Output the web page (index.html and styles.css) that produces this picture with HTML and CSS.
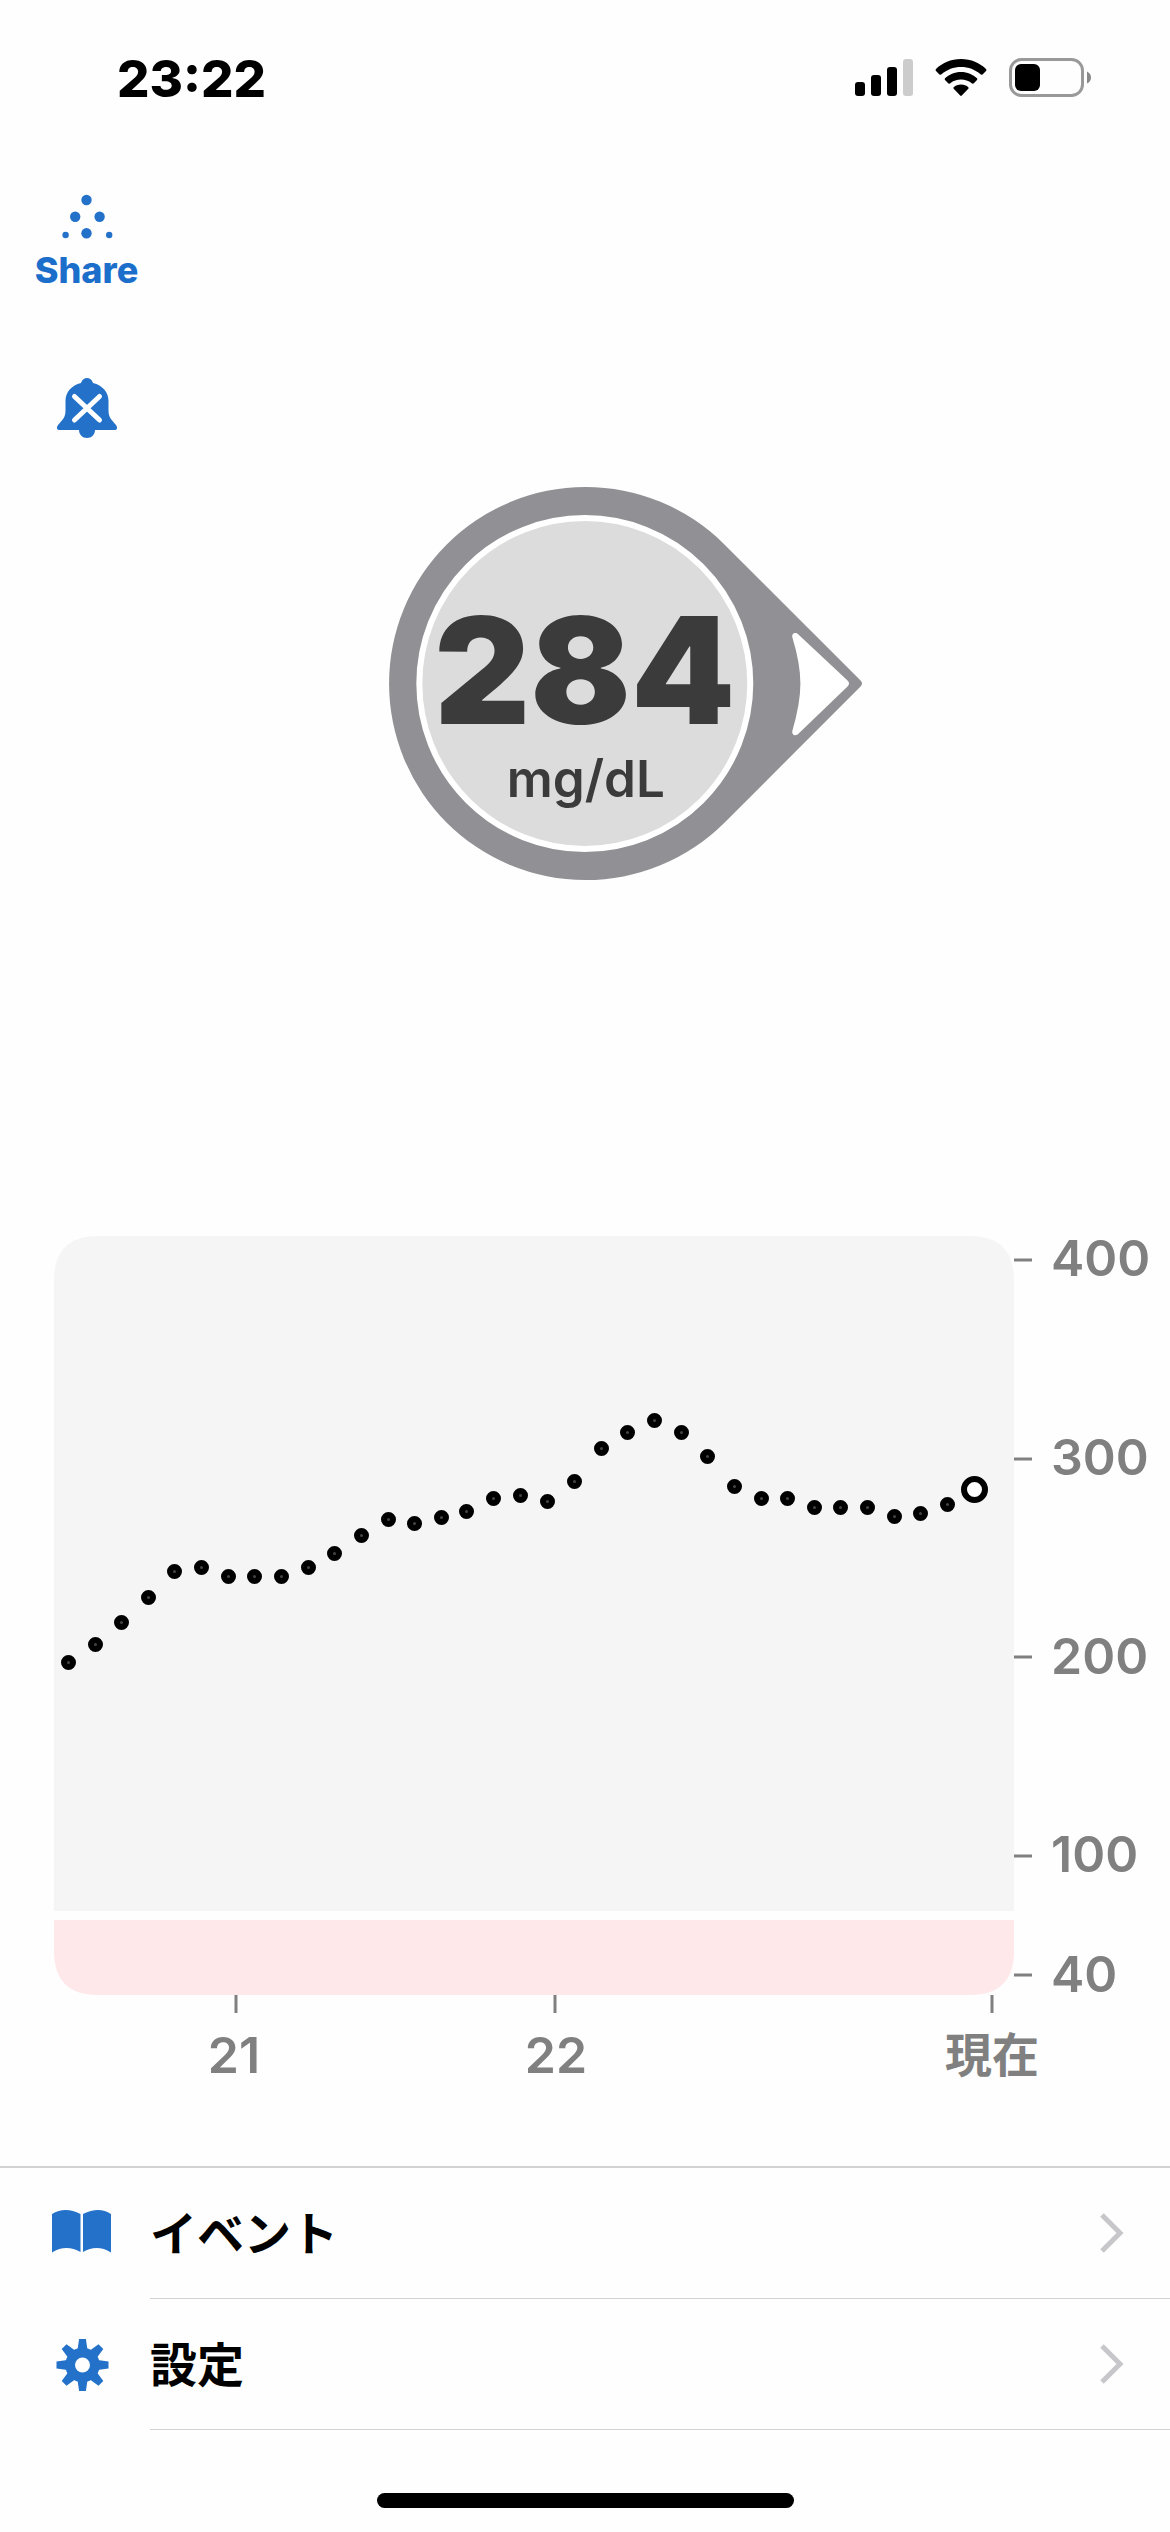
FILE: index.html
```
<!DOCTYPE html>
<html lang="ja">
<head>
  <meta charset="UTF-8">
  <meta name="viewport" content="width=device-width, initial-scale=1.0">
  <title>グルコース</title>
  <link rel="stylesheet" href="styles.css">
</head>
<body>
  <div class="screen">
    <!-- Status bar -->
    <header class="status-bar">
      <span class="status-time">23:22</span>
      <div class="status-icons">
        <svg width="58" height="40" viewBox="0 0 58 40" aria-hidden="true">
          <rect x="0" y="24" width="10" height="14" rx="3"/>
          <rect x="16" y="17" width="10" height="21" rx="3"/>
          <rect x="32" y="9" width="10" height="29" rx="3"/>
          <rect x="48" y="1" width="10" height="37" rx="3" fill="#ccc"/>
        </svg>
        <svg width="52" height="40" viewBox="0 0 52 40" aria-hidden="true">
          <path d="M26 1C16 1 7 5 1 11Q0 12 1 13L4.500 16.500Q5.500 17 6.500 16.300C12 11.500 18.500 9 26 9S40 11.500 45.500 16.300Q46.500 17 47.500 16.500L51 13Q52 12 51 11C45 5 36 1 26 1Z"/>
          <path d="M26 14C19.500 14 14 16.500 10 20.300Q9.300 21 10 22L13.500 25.500Q14.500 26 15.300 25.300C18.300 22.700 22 21.500 26 21.500S33.700 22.700 36.700 25.300Q37.500 26 38.500 25.500L42 22Q42.700 21 42 20.300C38 16.500 32.500 14 26 14Z"/>
          <path d="M26 26.500C23 26.500 20.500 27.500 18.700 29.200Q18 30 18.700 30.800L25.200 37.500Q26 38.300 26.800 37.500L33.300 30.800Q34 30 33.300 29.200C31.500 27.500 29 26.500 26 26.500Z"/>
        </svg>
        <svg width="82" height="40" viewBox="0 0 82 40" aria-hidden="true">
          <rect x="1.500" y="1.500" width="72" height="36" rx="11" fill="none" stroke="#999" stroke-width="3"/>
          <rect x="6" y="6" width="25" height="27" rx="6"/>
          <path d="M78 13.500Q82 15.500 82 19.500T78 25.500Z" fill="#888"/>
        </svg>
      </div>
    </header>

    <!-- Share and alarm buttons -->
    <div class="toolbar">
      <button type="button" class="tool-button">
        <svg width="46" height="44" viewBox="0 0 46 44" aria-hidden="true">
          <circle cx="22.500" cy="6" r="5.200"/>
          <circle cx="11.200" cy="22.700" r="5.200"/>
          <circle cx="35.600" cy="22.700" r="5.200"/>
          <circle cx="22.500" cy="39.300" r="5.200"/>
          <circle cx="1.600" cy="41" r="3.200"/>
          <circle cx="45.200" cy="41" r="3.200"/>
        </svg>
        <span>Share</span>
      </button>
      <button type="button" class="tool-button" aria-label="アラームオフ">
        <svg width="60" height="60" viewBox="0 0 60 60" aria-hidden="true">
          <path d="M24 5C25 1.500 27.500 0 30 0S35 1.500 36 5C45.500 7.500 51.500 14 51.500 23V32C51.500 35 52 38 53 39.500C54.500 42 57 44.500 59 47Q60.500 49 60 50.500Q59.500 52 57.500 52H38C38 56.500 34.500 60 30 60S22 56.500 22 52H2.500Q0.500 52 0 50.500Q-0.500 49 1 47C3 44.500 5.500 42 7 39.500C8 38 8.500 35 8.500 32V23C8.500 14 14.500 7.500 24 5Z"/>
          <path class="bell-cross" d="M17.500 18.500L42.500 42M42.500 18.500L17.500 42"/>
        </svg>
      </button>
    </div>

    <!-- Current reading -->
    <main>
      <svg class="gauge" viewBox="-280 -197 560 394" role="img" aria-label="284 mg/dL">
        <path class="gauge-ring" d="M139 -139A196 196 0 1 0 139 139L275 3Q278 0 275 -3Z"/>
        <circle class="gauge-face" r="165"/>
        <path class="gauge-arrow" d="M207 -46C206 -50 210 -52 213 -49L262 -3Q265 0 262 3L213 50C210 53 206 51 207 47Q215 20 215 0T207 -46Z"/>
        <text class="gauge-value" x="0" y="40">284</text>
        <text class="gauge-unit" x="1" y="113">mg/dL</text>
      </svg>

      <!-- Glucose history -->
      <svg class="chart" viewBox="0 0 1170 850" role="img" aria-label="グルコース値の推移">
        <path class="range-normal" d="M54 675V44Q54 0 98 0H970Q1014 0 1014 44V675Z"/>
        <path class="range-low" d="M54 684H1014V715Q1014 759 970 759H98Q54 759 54 715Z"/>
        <path class="ticks" d="M1014 24H1032M1014 223H1032M1014 421H1032M1014 620H1032M1014 739H1032M236 759V777M555 759V777M992 759V777"/>
        <g class="axis-y">
          <text x="1051" y="40">400</text>
          <text x="1051" y="239">300</text>
          <text x="1051" y="438">200</text>
          <text x="1051" y="636">100</text>
          <text x="1051" y="756">40</text>
        </g>
        <g class="axis-x">
          <text x="234" y="837">21</text>
          <text x="556" y="837">22</text>
          <text class="axis-now" x="992" y="836">現在</text>
        </g>
        <g id="readings"></g>
        <circle class="reading-now" cx="974.500" cy="253.500" r="10.500"/>
      </svg>
    </main>

    <!-- Menu -->
    <nav class="menu">
      <a href="#events" class="menu-item">
        <svg class="menu-icon" viewBox="0 0 66 60" aria-hidden="true">
          <path d="M3 10Q16 2 31.500 10V48Q17 40 3 48.500Z"/>
          <path d="M34 10Q50 2 62 10V48.500Q48 40 34 48Z"/>
        </svg>
        <span class="menu-label">
          <span class="menu-text">イベント</span>
          <svg class="chevron" viewBox="0 0 24 40" aria-hidden="true"><path d="M2 2L20 20L2 38"/></svg>
        </span>
      </a>
      <a href="#settings" class="menu-item">
        <svg class="menu-icon" viewBox="0 0 66 60" aria-hidden="true">
          <g transform="translate(33.500 30)">
            <path id="teeth" d="M-5 -15L-3.400 -26H3.400L5 -15ZM-5 15L-3.400 26H3.400L5 15ZM-15 -5L-26 -3.400V3.400L-15 5ZM15 -5L26 -3.400V3.400L15 5Z"/>
            <use href="#teeth" transform="rotate(45)"/>
            <circle r="17.300"/>
            <circle class="gear-hole" r="7.500"/>
          </g>
        </svg>
        <span class="menu-label">
          <span class="menu-text">設定</span>
          <svg class="chevron" viewBox="0 0 24 40" aria-hidden="true"><path d="M2 2L20 20L2 38"/></svg>
        </span>
      </a>
    </nav>

    <div class="home-indicator"></div>
  </div>

  <script>
    // Past readings as [x, y] in chart units
    const readings = [
      [68, 426], [95, 408], [121, 386], [148, 361], [174, 335], [201, 331],
      [228, 340], [254, 340], [281, 340], [308, 331], [334, 317], [361, 299],
      [388, 283], [414, 287], [441, 281], [466, 275], [493, 262], [520, 259],
      [547, 265], [574, 245], [601, 212], [627, 196], [654, 184], [681, 196],
      [707, 220], [734, 250], [761, 262], [787, 262], [814, 271], [840, 271],
      [867, 271], [894, 280], [920, 277], [947, 268]
    ];

    const group = document.getElementById('readings');
    readings.forEach(([x, y]) => {
      const dot = document.createElementNS('http://www.w3.org/2000/svg', 'circle');
      dot.setAttribute('cx', x + 0.5);
      dot.setAttribute('cy', y + 0.5);
      dot.setAttribute('r', 4.5);
      dot.setAttribute('class', 'reading');
      group.appendChild(dot);
    });
  </script>
</body>
</html>
```
FILE: styles.css
```
/* Basic reset */
* {
  margin: 0;
  padding: 0;
  box-sizing: border-box;
}

body {
  font-family: Inter, "Noto Sans CJK JP", sans-serif;
  background-color: #fefefe;
  color: #000;
}

svg {
  display: block;
  overflow: visible;
}

.screen {
  display: flex;
  flex-direction: column;
  min-height: 100vh;
}

/* Status bar */
.status-bar {
  display: flex;
  justify-content: space-between;
  align-items: center;
  height: 156px;
  padding: 0 79px 0 117px;
}

.status-time {
  font-size: 51px;
  font-weight: 800;
}

.status-icons {
  display: flex;
  gap: 22px;
}

/* Share and alarm buttons */
.toolbar {
  display: flex;
  flex-direction: column;
  align-items: flex-start;
  gap: 86px;
  padding-top: 38px;
}

.tool-button {
  display: flex;
  flex-direction: column;
  align-items: center;
  gap: 10px;
  width: 173px;
  border: none;
  background: none;
  color: #1b6fcb;
  font-family: inherit;
  font-size: 36px;
  font-weight: 800;
  line-height: 44px;
  cursor: pointer;
}

.tool-button svg {
  fill: #2471c9;
}

.tool-button .bell-cross {
  fill: none;
  stroke: #fff;
  stroke-width: 5px;
  stroke-linecap: round;
}

/* Current reading */
.gauge {
  width: 48%;
  margin: 48px auto 0;
}

.gauge-ring {
  fill: #919095;
}

.gauge-face {
  fill: #dcdcdc;
  stroke: #fff;
  stroke-width: 6px;
}

.gauge-arrow {
  fill: #fff;
}

.gauge-value,
.gauge-unit {
  fill: #3b3b3b;
  text-anchor: middle;
}

.gauge-value {
  font-size: 148px;
  font-weight: 900;
}

.gauge-unit {
  font-size: 51px;
  font-weight: 600;
}

/* Glucose history */
.chart {
  width: 100%;
  margin-top: 355px;
}

.range-normal {
  fill: #f5f5f5;
}

.range-low {
  fill: #ffe8e9;
}

.ticks {
  stroke: #808080;
  stroke-width: 3px;
}

.axis-y,
.axis-x {
  fill: #808080;
  font-size: 50px;
  font-weight: 600;
}

.axis-x {
  text-anchor: middle;
}

.axis-x .axis-now {
  font-size: 47px;
  font-weight: 700;
}

.reading {
  fill: #444;
  stroke: #000;
  stroke-width: 6px;
}

.reading-now {
  fill: #fff;
  stroke: #000;
  stroke-width: 6px;
}

/* Menu */
.menu {
  margin-top: 80px;
  border-top: 2px solid #d3d3d3;
}

.menu-item {
  display: flex;
  align-items: center;
  height: 131px;
  padding-left: 49px;
  color: #000;
  font-size: 47px;
  font-weight: 700;
  text-decoration: none;
}

.menu-icon {
  width: 66px;
  height: 60px;
  margin-right: 35px;
  fill: #2471c9;
}

.menu-icon .gear-hole {
  fill: #fefefe;
}

.menu-label {
  flex: 1;
  display: flex;
  justify-content: space-between;
  align-items: center;
  height: 100%;
  padding-right: 46px;
  border-bottom: 1px solid #d3d3d3;
}

.menu-text {
  padding-bottom: 6px;
}

.chevron {
  width: 24px;
  height: 40px;
  fill: none;
  stroke: #c7c7cb;
  stroke-width: 5px;
}

.home-indicator {
  width: 417px;
  height: 15px;
  margin: auto auto 24px;
  border-radius: 8px;
  background-color: #000;
}
```
